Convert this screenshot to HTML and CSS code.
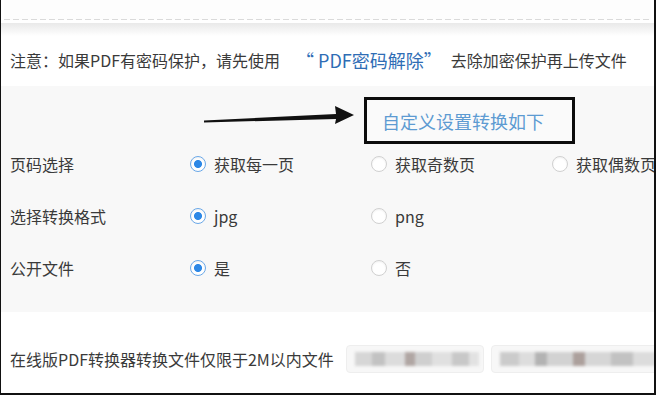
FILE: index.html
```html
<!DOCTYPE html>
<html lang="zh-CN">
<head>
    <meta charset="UTF-8">
    <title>PDF转换</title>
    <link rel="stylesheet" href="styles.css">
</head>
<body>
    <div class="frame">
        <div class="topbar"></div>
        <div class="shade"></div>

        <div class="notice">
            <span>注意：如果PDF有密码保护，请先使用</span>
            <a class="unlock" href="#">“ PDF密码解除”</a>
            <span>去除加密保护再上传文件</span>
        </div>

        <div class="settings">
            <div class="custom">
                <svg class="arrow" width="155" height="46" viewBox="0 0 155 46">
                    <path d="M3 22.5 L135 16 L134 8 L153 17 L134 26 L135 21 L3 24.5 Z" fill="#111"/>
                </svg>
                <div class="custom-box">自定义设置转换如下</div>
            </div>

            <div class="row">
                <div class="label">页码选择</div>
                <label class="option"><span class="radio checked"></span>获取每一页</label>
                <label class="option"><span class="radio"></span>获取奇数页</label>
                <label class="option"><span class="radio"></span>获取偶数页</label>
            </div>

            <div class="row">
                <div class="label">选择转换格式</div>
                <label class="option"><span class="radio checked"></span>jpg</label>
                <label class="option"><span class="radio"></span>png</label>
            </div>

            <div class="row">
                <div class="label">公开文件</div>
                <label class="option"><span class="radio checked"></span>是</label>
                <label class="option"><span class="radio"></span>否</label>
            </div>
        </div>

        <div class="footer">
            <span>在线版PDF转换器转换文件仅限于2M以内文件</span>
            <span class="blurred first"></span>
            <span class="blurred second"></span>
        </div>
    </div>
</body>
</html>
```

FILE: styles.css
```css
html, body {
    margin: 0;
    padding: 0;
}
body {
    font-family: "Noto Sans CJK SC", "Microsoft YaHei", sans-serif;
    color: #3a3a3a;
    background: #fff;
}
.frame {
    width: 656px;
    height: 395px;
    box-sizing: border-box;
    border-left: 1px solid #111;
    border-right: 2px solid #111;
    border-bottom: 2px solid #111;
    overflow: hidden;
    display: flex;
    flex-direction: column;
    background: #fff;
}
.topbar {
    height: 19px;
    margin: 0 3px;
    border-bottom: 1px solid transparent;
    background: #fdfdfd;
    background-image: repeating-linear-gradient(90deg, #dadada 0 6px, transparent 6px 9px);
    background-size: 100% 1px;
    background-position: 0 19px;
    background-repeat: no-repeat;
}
.shade {
    height: 13px;
    margin-top: 3px;
    background: linear-gradient(#e9e9e9, #f6f6f6 60%, #fff);
}
.notice {
    height: 47px;
    padding-bottom: 3px;
    display: flex;
    align-items: center;
    padding-left: 9px;
    font-size: 16px;
    white-space: nowrap;
}
.unlock {
    color: #2f6db5;
    font-size: 18px;
    text-decoration: none;
    margin: 0 9px 0 16px;
}
.settings {
    background: #f8f8f8;
    padding: 11px 0 28px;
}
.custom {
    display: flex;
    align-items: center;
    padding-left: 200px;
    gap: 8px;
}
.arrow {
    display: block;
}
.custom-box {
    box-sizing: border-box;
    width: 211px;
    height: 47px;
    border: 3px solid #0c0c0c;
    padding-left: 15px;
    display: flex;
    align-items: center;
    color: #5d9bd2;
    font-size: 18px;
    background: #fafafa;
}
.row {
    display: flex;
    align-items: center;
    height: 32px;
    margin-top: 20px;
    font-size: 16px;
    white-space: nowrap;
}
.custom + .row {
    margin-top: 4px;
}
.label {
    width: 189px;
    padding-left: 9px;
    box-sizing: border-box;
    flex-shrink: 0;
}
.option {
    width: 181px;
    display: flex;
    align-items: center;
    gap: 8px;
    flex-shrink: 0;
}
.radio {
    box-sizing: border-box;
    width: 16px;
    height: 16px;
    border-radius: 50%;
    border: 1px solid #d0d0d0;
    background: #fff;
    box-shadow: inset 0 1px 2px rgba(0, 0, 0, 0.06);
}
.radio.checked {
    border-color: #6aa8e8;
    background: radial-gradient(circle, #2d88e6 0 3.6px, #fff 4.4px);
}
.footer {
    flex: 1;
    display: flex;
    align-items: center;
    padding: 12px 0 0 9px;
    font-size: 16px;
    white-space: nowrap;
}
.blurred {
    height: 26px;
    border-radius: 4px;
    border: 1px solid #eee;
    background: #f7f7f7;
    position: relative;
    flex-shrink: 0;
}
.blurred::after {
    content: "";
    position: absolute;
    left: 8px;
    right: 4px;
    top: 6px;
    height: 14px;
    filter: blur(1.5px);
}
.blurred.first {
    width: 136px;
    margin-left: 12px;
}
.blurred.first::after {
    background: linear-gradient(90deg, #d6d6d6 0 14%, #c2c2c2 14% 24%, #dcdcdc 24% 40%, #b0a6a3 40% 48%, #cfcfcf 48% 62%, #e0e0e0 62% 78%, #c8c8c8 78% 92%, #e2e2e2 92%);
}
.blurred.second {
    width: 170px;
    margin-left: 7px;
}
.blurred.second::after {
    background: linear-gradient(90deg, #cbcbcb 0 12%, #dddddd 12% 22%, #b3b3b3 22% 30%, #d2d2d2 30% 46%, #aca09c 46% 54%, #d6d6d6 54% 70%, #c2c2c2 70% 84%, #dcdcdc 84%);
}
```
